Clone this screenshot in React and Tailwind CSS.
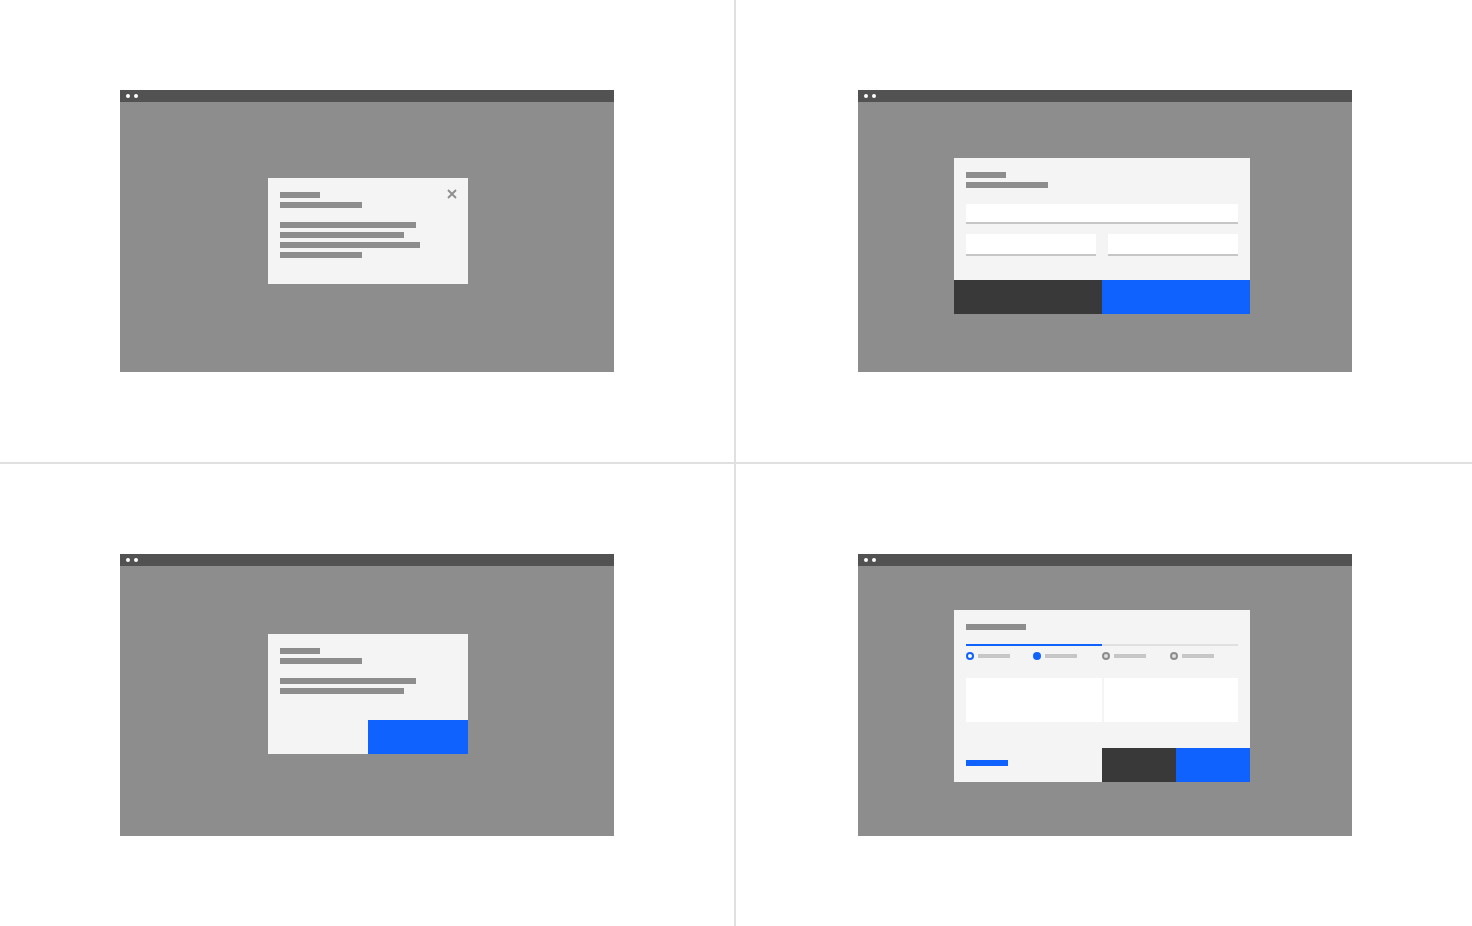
import React from 'react';

// grey placeholder bar standing in for a line of copy
const Bar = ({ w, className = '' }) => (
  <div className={`h-[6px] bg-[#8d8d8d] ${className}`} style={{ width: w }} />
);

const BrowserWindow = ({ children }) => (
  <div className="w-[494px] h-[282px] flex flex-col">
    <div className="h-[12px] bg-[#525252] flex items-center gap-[4px] pl-[6px]">
      <span className="w-[4px] h-[4px] rounded-full bg-white" />
      <span className="w-[4px] h-[4px] rounded-full bg-white" />
    </div>
    <div className="flex-1 bg-[#8d8d8d]">{children}</div>
  </div>
);

const Heading = () => (
  <div className="flex flex-col gap-[4px]">
    <Bar w={40} />
    <Bar w={82} />
  </div>
);

const PassiveModal = () => (
  <div className="ml-[148px] mt-[76px] w-[200px] h-[106px] bg-[#f4f4f4] relative px-[12px] pt-[14px]">
    <Heading />
    <div className="flex flex-col gap-[4px] mt-[14px]">
      <Bar w={136} />
      <Bar w={124} />
      <Bar w={140} />
      <Bar w={82} />
    </div>
    <svg className="absolute top-[10px] right-[10px]" width="12" height="12" viewBox="0 0 12 12">
      <path d="M2 2 L10 10 M10 2 L2 10" stroke="#8d8d8d" strokeWidth="1.8" fill="none" />
    </svg>
  </div>
);

const Field = ({ className = '', h = 'h-[18px]' }) => (
  <div className={`bg-white border-b-2 border-[#c6c6c6] ${h} box-content ${className}`} />
);

const FormModal = () => (
  <div className="ml-[96px] mt-[56px] w-[296px] h-[156px] bg-[#f4f4f4] flex flex-col">
    <div className="px-[12px] pt-[14px]">
      <Heading />
      <Field className="mt-[16px]" />
      <div className="flex gap-[12px] mt-[10px]">
        <Field className="flex-1" h="h-[20px]" />
        <Field className="flex-1" h="h-[20px]" />
      </div>
    </div>
    <div className="mt-auto flex h-[34px]">
      <div className="flex-1 bg-[#393939]" />
      <div className="flex-1 bg-[#0f62fe]" />
    </div>
  </div>
);

const AcknowledgeModal = () => (
  <div className="ml-[148px] mt-[68px] w-[200px] h-[120px] bg-[#f4f4f4] flex flex-col">
    <div className="px-[12px] pt-[14px]">
      <Heading />
      <div className="flex flex-col gap-[4px] mt-[14px]">
        <Bar w={136} />
        <Bar w={124} />
      </div>
    </div>
    <div className="mt-auto flex justify-end">
      <div className="w-[100px] h-[34px] bg-[#0f62fe]" />
    </div>
  </div>
);

const Step = ({ state }) => {
  const dot =
    state === 'current'
      ? 'bg-[#0f62fe]'
      : state === 'done'
      ? 'border-2 border-[#0f62fe] bg-white'
      : 'border-2 border-[#8d8d8d] bg-[#e0e0e0]';
  return (
    <div className="w-[68px] flex items-center gap-[4px]">
      <span className={`w-[8px] h-[8px] rounded-full ${dot}`} />
      <span className="w-[32px] h-[4px] bg-[#c6c6c6]" />
    </div>
  );
};

const WizardModal = () => (
  <div className="ml-[96px] mt-[44px] w-[296px] h-[172px] bg-[#f4f4f4] flex flex-col">
    <div className="px-[12px] pt-[14px]">
      <Bar w={60} />
      <div className="mt-[14px] flex h-[2px]">
        <div className="w-[136px] bg-[#0f62fe]" />
        <div className="flex-1 bg-[#e0e0e0]" />
      </div>
      <div className="mt-[6px] flex">
        <Step state="done" />
        <Step state="current" />
        <div className="ml-[2px] flex">
          <Step state="todo" />
          <Step state="todo" />
        </div>
      </div>
      <div className="mt-[18px] flex gap-[2px] h-[44px]">
        <div className="w-[136px] bg-white" />
        <div className="flex-1 bg-white" />
      </div>
    </div>
    <div className="mt-auto flex h-[34px]">
      <div className="flex-1 pl-[12px] pt-[12px]">
        <div className="w-[42px] h-[6px] bg-[#0f62fe]" />
      </div>
      <div className="w-[74px] bg-[#393939]" />
      <div className="w-[74px] bg-[#0f62fe]" />
    </div>
  </div>
);

export default function App() {
  return (
    <div className="w-[1472px] h-[926px] bg-white flex flex-col overflow-hidden">
      <div className="flex h-[464px] border-b-2 border-[#e0e0e0]">
        <div className="w-[736px] border-r-2 border-[#e0e0e0] pl-[120px] pt-[90px]">
          <BrowserWindow><PassiveModal /></BrowserWindow>
        </div>
        <div className="flex-1 pl-[122px] pt-[90px]">
          <BrowserWindow><FormModal /></BrowserWindow>
        </div>
      </div>
      <div className="flex flex-1">
        <div className="w-[736px] border-r-2 border-[#e0e0e0] pl-[120px] pt-[90px]">
          <BrowserWindow><AcknowledgeModal /></BrowserWindow>
        </div>
        <div className="flex-1 pl-[122px] pt-[90px]">
          <BrowserWindow><WizardModal /></BrowserWindow>
        </div>
      </div>
    </div>
  );
}
